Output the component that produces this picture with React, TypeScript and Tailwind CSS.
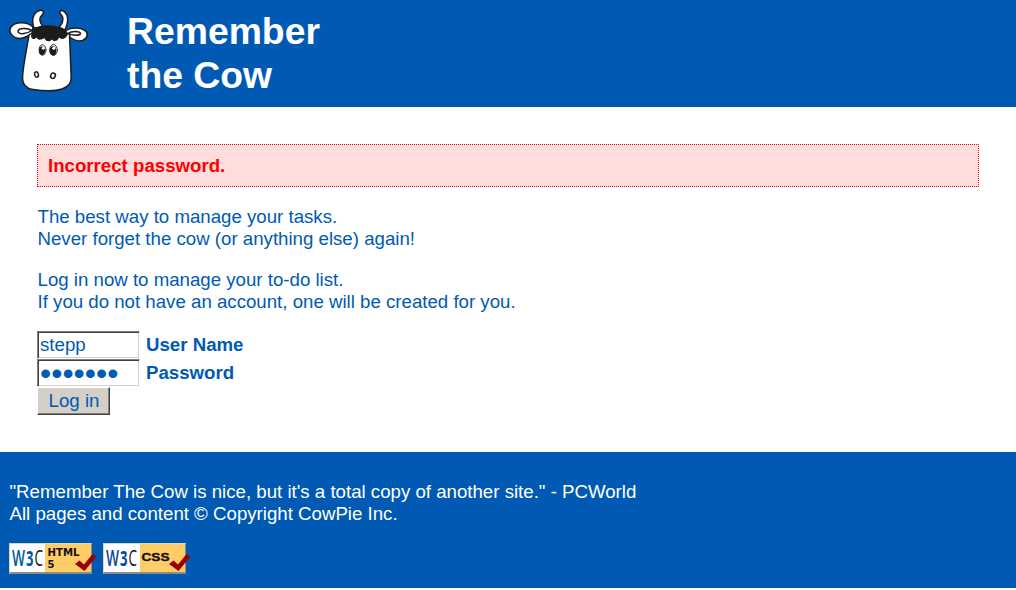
import React from "react";

function CowLogo() {
  return (
    <svg width="100" height="107" viewBox="0 0 100 107" role="img" aria-label="Cow" stroke="#1c1c1c" strokeWidth="1.5" strokeLinejoin="round" strokeLinecap="round">
      <path d="M34 28 C31 20 33 12 40.500 10.300 C43.500 10 44.500 13 42 15 C38.500 18 39.500 22 43 27 Z" fill="#fff" />
      <path d="M58.500 27 C63 24 64.500 17 60.500 14 C58.500 11 61 9.500 64 11.300 C69 15 68.500 23 65 30 Z" fill="#fff" />
      <path d="M33 27 C27 21 15 21.500 11 27 C7.500 32 13 38.500 20 38.500 C25 38 28 36 32 34 Z" fill="#fff" />
      <path d="M32 30.500 C27 27.500 19 28 18 31 C18 35 26 34.500 32 30.500 Z" fill="#fff" />
      <path d="M66 30.500 C71 27 82 27 86.500 32 C89 36 85 41 79 41 C74 41 70 37 66 34.500 Z" fill="#fff" />
      <path d="M68 33.500 C72 30.500 80 31 80.500 33.500 C80 36 71 35.500 68 33.500 Z" fill="#fff" />
      <path d="M29 35 C27 48 23 65 22.500 78 C22.500 85 26 88.500 33 89.500 C43 91 55 91.500 62 89 C68 87 71.500 83 71.200 77 L69.500 34 C62 30 36 29 29 35 Z" fill="#fff" />
      <path d="M31 36 C33 27 40 24.700 49 25.200 C57 25.500 65 28.500 68 34.500 C65 40 61 39.500 59 37.500 C58 41 54 42.500 52 39.500 C49 43 45 41 44.500 38 C41 40 38 40.500 36.500 37.500 C34 40 31.500 39.500 31 36 Z" fill="#1c1c1c" stroke="none" />
      <ellipse cx="42.500" cy="50" rx="3.400" ry="5.300" fill="#fff" strokeWidth="0.900" />
      <ellipse cx="53.500" cy="50" rx="3.800" ry="5.500" fill="#fff" strokeWidth="0.900" />
      <ellipse cx="42" cy="50.700" rx="3" ry="4.300" fill="#1c1c1c" stroke="none" />
      <ellipse cx="53" cy="50.700" rx="3.300" ry="4.500" fill="#1c1c1c" stroke="none" />
      <circle cx="43.200" cy="48.300" r="1.400" fill="#fff" stroke="none" />
      <circle cx="53.800" cy="48.300" r="1.500" fill="#fff" stroke="none" />
      <ellipse cx="36.500" cy="74.500" rx="1.900" ry="2.700" fill="#fff" transform="rotate(-12 36.500 74.500)" />
      <ellipse cx="53" cy="75.700" rx="2.300" ry="2.700" fill="#fff" transform="rotate(25 53 75.700)" />
    </svg>
  );
}

function W3CBadge({ kind }: { kind: "html" | "css" }) {
  const html = kind === "html";
  const ink = html ? "#005a9c" : "#0c479d";
  return (
    <svg width="88" height="31" viewBox="0 0 88 31" role="img" aria-label={html ? "Valid HTML5" : "Valid CSS"}>
      <path d="M0 0H83V31H0Z" fill="#8c8c84" />
      <path d="M0 0H83L82 1V29H1L0 31Z" fill="#d8d5c9" />
      <path d="M1 1H37V29H1Z" fill="#fff" />
      <path d={html ? "M36 1H82V29H36Z" : "M37 1H82V29H37Z"} fill="#ffcc66" />
      <g fontFamily="Open Sans, sans-serif" fontSize="22">
        <text x="3" y="22.700" fill={ink} fontWeight="600" textLength="13" lengthAdjust="spacingAndGlyphs">W</text>
        <text x="17" y="22.700" fill={ink} fontWeight="700" textLength="7.500" lengthAdjust="spacingAndGlyphs">3</text>
        <text x="25.500" y="22.700" fill="#111" textLength="8.500" lengthAdjust="spacingAndGlyphs">C</text>
      </g>
      {html ? (
        <g fontFamily="DejaVu Sans, sans-serif" fontWeight="700" fontSize="10" fill="#111">
          <text x="38.500" y="12.500" textLength="32" lengthAdjust="spacingAndGlyphs">HTML</text>
          <text x="38.500" y="24.500" fontSize="10">5</text>
        </g>
      ) : (
        <text x="38.500" y="18" fontFamily="Liberation Sans, sans-serif" fontWeight="700" fontSize="10" fill="#111" stroke="#111" strokeWidth="0.300" textLength="28" lengthAdjust="spacingAndGlyphs">CSS</text>
      )}
      <path d="M66 21L70.500 17.500L75 21.500L83.500 11L87.500 13.500L75.500 28Z" fill="#990000" />
    </svg>
  );
}

export default function App() {
  return (
    <div className="min-h-[590px] bg-white font-['Liberation_Sans',Arial,sans-serif] text-[18.667px] leading-[22px] text-[#005ab4]">
      <header className="flex h-[107px] bg-[#005ab4] text-white">
        <CowLogo />
        <h1 className="ml-[27px] pt-[9px] text-[37.333px] leading-[44px] font-bold">
          Remember<br />the Cow
        </h1>
      </header>

      <main className="h-[345px] px-[37px] pt-[37px]">
        <p className="h-[43px] border border-dotted border-[#ff0000] bg-[#ffdddd] px-[10px] pt-[10px] font-bold text-[#ff0000]">Incorrect password.</p>
        <p className="mt-[19px] pl-[0.5px]">The best way to manage your tasks.<br />Never forget the cow (or anything else) again!</p>
        <p className="mt-[19px] pl-[0.5px]">Log in now to manage your to-do list.<br />If you do not have an account, one will be created for you.</p>
        <form className="mt-[18px]" onSubmit={(e) => e.preventDefault()}>
          <label className="flex h-[28px] items-start font-bold">
            <input defaultValue="stepp" className="h-[28px] w-[103px] border border-t-[#808080] border-r-white border-b-white border-l-[#808080] bg-white px-[2px] font-normal shadow-[inset_1px_1px_0_#404040,inset_-1px_-1px_0_#d4d0c8] outline-none" />
            <span className="ml-[6px] pt-[3px]">User Name</span>
          </label>
          <label className="flex h-[28px] items-start font-bold">
            <input type="password" defaultValue="cowpies" className="h-[28px] w-[103px] border border-t-[#808080] border-r-white border-b-white border-l-[#808080] bg-white px-[2px] text-[32px] leading-[22px] font-normal shadow-[inset_1px_1px_0_#404040,inset_-1px_-1px_0_#d4d0c8] outline-none" />
            <span className="ml-[6px] pt-[3px]">Password</span>
          </label>
          <button className="block h-[28px] w-[73px] border border-t-white border-r-[#404040] border-b-[#404040] border-l-white bg-[#d4d0c8] pl-px shadow-[inset_-1px_-1px_0_#808080]">Log in</button>
        </form>
      </main>

      <footer className="h-[136px] bg-[#005ab4] px-[9px] pt-[29px] text-white">
        <p className="pl-[0.5px]">"Remember The Cow is nice, but it's a total copy of another site." - PCWorld<br />All pages and content © Copyright CowPie Inc.</p>
        <div className="mt-[18px] flex gap-[6px]">
          <W3CBadge kind="html" />
          <W3CBadge kind="css" />
        </div>
      </footer>
    </div>
  );
}
